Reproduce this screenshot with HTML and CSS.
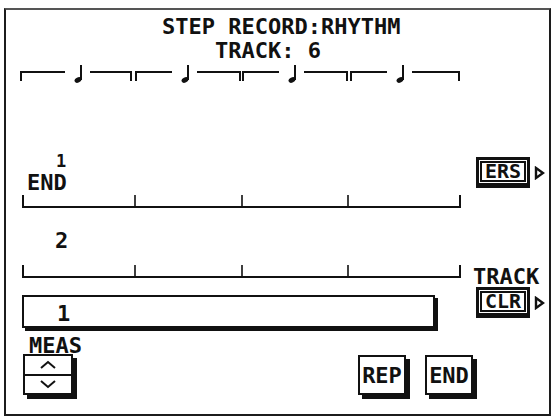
FILE: index.html
```html
<!DOCTYPE html>
<html>
<head>
<meta charset="utf-8">
<title>Step Record: Rhythm</title>
<link rel="stylesheet" href="styles.css">
</head>
<body>
<div class="screen">
  <header class="head">
    <div class="title">STEP RECORD:RHYTHM</div>
    <div class="track">TRACK: 6</div>
  </header>

  <svg class="beats" width="445" height="20" viewBox="0 0 445 20">
    <g fill="none" stroke="#111" stroke-width="2">
      <path d="M3 18 V9 H47 M72 9 H113 V18"/>
      <path d="M118 18 V9 H154 M179 9 H222 V18"/>
      <path d="M225 18 V9 H261 M286 9 H329 V18"/>
      <path d="M333 18 V9 H369 M394 9 H441 V18"/>
      <path d="M63 17 V2 M170 17 V2 M277 17 V2 M385 17 V2"/>
    </g>
    <g fill="#111">
      <ellipse cx="60" cy="17" rx="3.6" ry="2.6" transform="rotate(-25 60 17)"/>
      <ellipse cx="167" cy="17" rx="3.6" ry="2.6" transform="rotate(-25 167 17)"/>
      <ellipse cx="274" cy="17" rx="3.6" ry="2.6" transform="rotate(-25 274 17)"/>
      <ellipse cx="382" cy="17" rx="3.6" ry="2.6" transform="rotate(-25 382 17)"/>
    </g>
  </svg>

  <section class="row row1">
    <div class="main">
      <div class="num-sm">1</div>
      <div class="lbl">END</div>
      <svg class="ruler" width="462" height="16" viewBox="0 0 462 16">
        <path d="M17 1 V13 H454 V1" fill="none" stroke="#111" stroke-width="2"/>
        <path d="M129 1 V13 M236 1 V13 M342 1 V13" fill="none" stroke="#111" stroke-width="1.6"/>
      </svg>
    </div>
    <div class="side">
      <div class="softkey key-ers">
        <div class="key"><span class="key-in">ERS</span></div>
        <svg class="arrow" width="11" height="14" viewBox="0 0 11 14"><path d="M2 2 L9 7 L2 12 Z" fill="none" stroke="#111" stroke-width="2.4" stroke-linejoin="miter"/></svg>
      </div>
    </div>
  </section>

  <section class="row row2">
    <div class="main">
      <div class="num">2</div>
      <svg class="ruler ruler2" width="462" height="16" viewBox="0 0 462 16">
        <path d="M17 1 V13 H454 V1" fill="none" stroke="#111" stroke-width="2"/>
        <path d="M129 1 V13 M236 1 V13 M342 1 V13" fill="none" stroke="#111" stroke-width="1.6"/>
      </svg>
      <div class="bar"><span>1</span></div>
    </div>
    <div class="side">
      <div class="side-lbl">TRACK</div>
      <div class="softkey key-clr">
        <div class="key"><span class="key-in">CLR</span></div>
        <svg class="arrow" width="11" height="14" viewBox="0 0 11 14"><path d="M2 2 L9 7 L2 12 Z" fill="none" stroke="#111" stroke-width="2.4" stroke-linejoin="miter"/></svg>
      </div>
    </div>
  </section>

  <section class="row3">
    <div class="meas">
      <div class="meas-lbl">MEAS</div>
      <div class="updown">
        <div class="ud-half">
          <svg width="18" height="10" viewBox="0 0 18 10"><path d="M2 8 L9 2 L16 8" fill="none" stroke="#111" stroke-width="2"/></svg>
        </div>
        <div class="ud-half ud-down">
          <svg width="18" height="10" viewBox="0 0 18 10"><path d="M2 2 L9 8 L16 2" fill="none" stroke="#111" stroke-width="2"/></svg>
        </div>
      </div>
    </div>
    <div class="btn">REP</div>
    <div class="btn">END</div>
  </section>
</div>
</body>
</html>
```

FILE: styles.css
```css
* {
  box-sizing: border-box;
}

html,
body {
  margin: 0;
  padding: 0;
  background: #fff;
}

body {
  width: 553px;
  height: 417px;
  overflow: hidden;
  font-family: "DejaVu Sans Mono", "Liberation Mono", monospace;
  font-weight: bold;
  font-size: 22px;
  line-height: 17px;
  color: #111;
}

.screen {
  margin: 8px 0 0 4px;
  width: 547px;
  height: 408px;
  border: 2px solid #1c1c1c;
  border-top-color: #555;
}

.head {
  display: flex;
  flex-direction: column;
  align-items: flex-start;
  padding-top: 8px;
}

.title {
  margin-left: 156px;
}

.track {
  margin-top: 7px;
  margin-left: 209px;
}

.beats {
  display: block;
  margin: 4px 0 0 12px;
}

.row {
  display: flex;
}

.main {
  width: 462px;
  flex: none;
}

.row1 {
  margin-top: 71px;
}

.num-sm {
  padding-left: 50px;
  font-size: 17px;
  line-height: 14px;
}

.lbl {
  margin-top: 6px;
  padding-left: 21px;
}

.num {
  padding-left: 49px;
}

.ruler {
  display: block;
  margin-top: 3px;
}

.row2 {
  margin-top: 22px;
}

.ruler2 {
  margin-top: 15px;
}

.bar {
  margin: 15px 0 0 16px;
  width: 413px;
  height: 33px;
  border: 2px solid #111;
  box-shadow: 3px 3px 0 #111;
  padding: 3px 0 0 33px;
  display: flex;
  align-items: center;
}

.side {
  display: flex;
  flex-direction: column;
  align-items: flex-start;
}

.softkey {
  display: flex;
  align-items: center;
  gap: 4px;
}

.key-ers {
  margin: 3px 0 0 8px;
}

.side-lbl {
  margin: 36px 0 0 5px;
}

.key-clr {
  margin: 2px 0 0 8px;
}

.key {
  width: 54px;
  height: 31px;
  border: 3px solid #111;
  border-bottom-width: 5px;
  padding: 1px;
}

.key-in {
  display: block;
  height: 100%;
  border: 2px solid #111;
  font-size: 20px;
  line-height: 17px;
  text-align: center;
}

.arrow {
  display: block;
}

.row3 {
  margin-top: 9px;
  display: grid;
  grid-template-columns: 333px 48px 48px;
  column-gap: 19px;
  align-items: end;
}

.meas-lbl {
  padding-left: 23px;
}

.updown {
  margin-left: 17px;
  width: 50px;
  height: 41px;
  border: 2px solid #111;
  box-shadow: 4px 4px 0 #111;
  display: flex;
  flex-direction: column;
}

.ud-half {
  flex: 1;
  display: flex;
  align-items: center;
  justify-content: center;
}

.ud-down {
  border-top: 2px solid #111;
}

.ud-half svg {
  display: block;
}

.btn {
  height: 40px;
  border: 2px solid #111;
  box-shadow: 4px 4px 0 #111;
  display: flex;
  align-items: center;
  justify-content: center;
}
```
